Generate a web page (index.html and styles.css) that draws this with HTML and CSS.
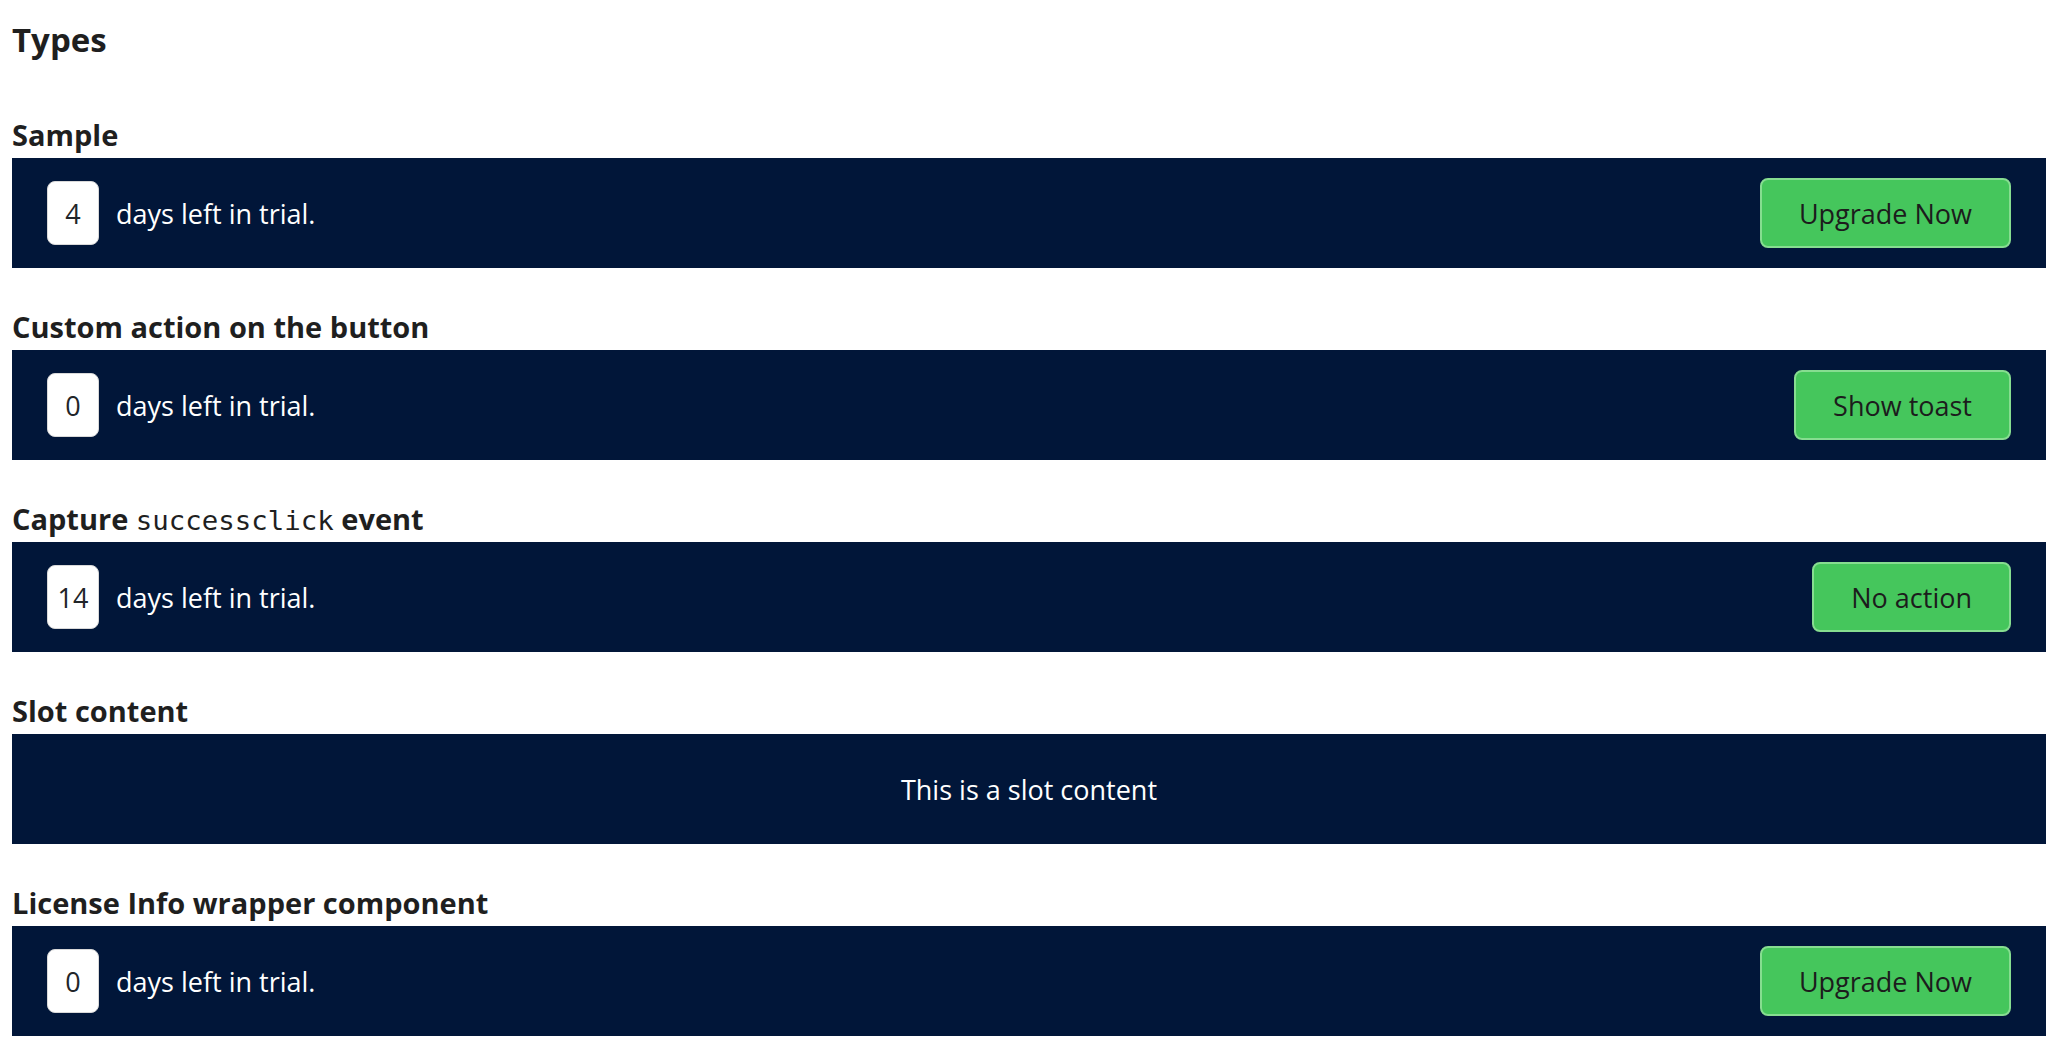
FILE: index.html
```html
<!DOCTYPE html>
<html lang="en">
<head>
<meta charset="utf-8">
<title>Types</title>
<link rel="stylesheet" href="styles.css">
</head>
<body>
<main class="page">
  <h2 class="page-title">Types</h2>

  <section class="example">
    <h3 class="example-title">Sample</h3>
    <div class="license-bar">
      <div class="trial-info">
        <span class="days-badge">4</span>
        <span class="trial-text">days left in trial.</span>
      </div>
      <button class="upgrade-btn" type="button">Upgrade Now</button>
    </div>
  </section>

  <section class="example">
    <h3 class="example-title">Custom action on the button</h3>
    <div class="license-bar">
      <div class="trial-info">
        <span class="days-badge">0</span>
        <span class="trial-text">days left in trial.</span>
      </div>
      <button class="upgrade-btn" type="button">Show toast</button>
    </div>
  </section>

  <section class="example">
    <h3 class="example-title">Capture <code class="event-name">successclick</code> event</h3>
    <div class="license-bar">
      <div class="trial-info">
        <span class="days-badge">14</span>
        <span class="trial-text">days left in trial.</span>
      </div>
      <button class="upgrade-btn" type="button">No action</button>
    </div>
  </section>

  <section class="example">
    <h3 class="example-title">Slot content</h3>
    <div class="license-bar license-bar--slot">
      <span class="slot-text">This is a slot content</span>
    </div>
  </section>

  <section class="example">
    <h3 class="example-title">License Info wrapper component</h3>
    <div class="license-bar">
      <div class="trial-info">
        <span class="days-badge">0</span>
        <span class="trial-text">days left in trial.</span>
      </div>
      <button class="upgrade-btn" type="button">Upgrade Now</button>
    </div>
  </section>
</main>
</body>
</html>
```
FILE: styles.css
```css
* { box-sizing: border-box; }

html, body {
  margin: 0;
  padding: 0;
  background: #ffffff;
}

body {
  font-family: "Open Sans", "Noto Sans", "Liberation Sans", sans-serif;
  color: #1f1f1f;
}

.page {
  padding: 17px 12px 0;
}

.page-title {
  margin: 0;
  font-size: 33px;
  line-height: 45px;
  font-weight: 700;
  color: #1f1f1f;
}

.example {
  margin-top: 39px;
}

.page-title + .example {
  margin-top: 53px;
}

.example-title {
  margin: 0 0 3px;
  font-size: 29px;
  line-height: 40px;
  font-weight: 700;
  color: #1f1f1f;
}

.event-name {
  font-family: "DejaVu Sans Mono", "Liberation Mono", monospace;
  font-size: 27.4px;
  line-height: 1;
  font-weight: 400;
  color: #1f1f1f;
}

.license-bar {
  height: 110px;
  background: #011639;
  display: flex;
  align-items: center;
  justify-content: space-between;
  padding: 0 35px;
}

.license-bar--slot {
  justify-content: center;
}

.trial-info {
  display: flex;
  align-items: center;
  gap: 17px;
}

.days-badge {
  width: 52px;
  height: 64px;
  background: #ffffff;
  border: 1px solid #d9d9d9;
  border-radius: 8px;
  display: flex;
  align-items: center;
  justify-content: center;
  font-size: 27px;
  font-weight: 400;
  color: #212529;
}

.trial-text,
.slot-text {
  color: #ffffff;
  font-size: 27px;
  font-weight: 400;
}

.upgrade-btn {
  height: 70px;
  padding: 0 37px;
  background: #45c65c;
  border: 2px solid #86dd90;
  border-radius: 8px;
  font-family: inherit;
  font-size: 27px;
  font-weight: 400;
  color: #1c1c1c;
  cursor: pointer;
}
```
